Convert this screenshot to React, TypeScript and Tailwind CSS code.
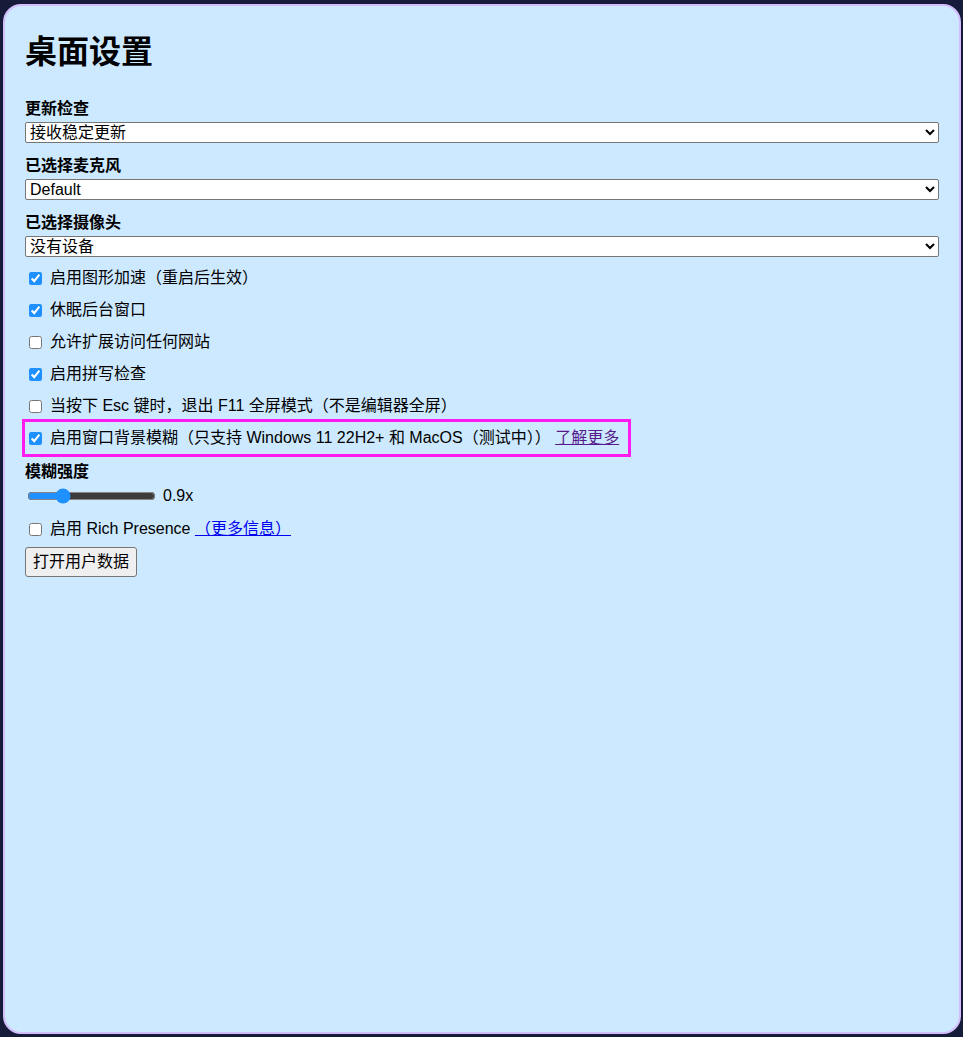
import { useState } from 'react';

type Toggle = {
  id: string;
  label: string;
  checked: boolean;
};

const toggles: Toggle[] = [
  { id: 'hw', label: '启用图形加速（重启后生效）', checked: true },
  { id: 'sleep', label: '休眠后台窗口', checked: true },
  { id: 'ext', label: '允许扩展访问任何网站', checked: false },
  { id: 'spell', label: '启用拼写检查', checked: true },
  { id: 'esc', label: '当按下 Esc 键时，退出 F11 全屏模式（不是编辑器全屏）', checked: false },
];

function Field({ label, options }: { label: string; options: string[] }) {
  return (
    <div className="mt-[11px] first:mt-0">
      <div className="text-[16px] leading-[24px] font-bold">{label}</div>
      <select className="mt-[1px] block w-full h-[21px] text-[16px] leading-[19px] pl-0 bg-white border border-[#767676] rounded-[2px] text-black">
        {options.map((o) => (
          <option key={o}>{o}</option>
        ))}
      </select>
    </div>
  );
}

export default function App() {
  const [checks, setChecks] = useState<Record<string, boolean>>(
    Object.fromEntries(toggles.map((t) => [t.id, t.checked]))
  );
  const [blur, setBlur] = useState(true);
  const [rich, setRich] = useState(false);
  const [strength, setStrength] = useState(0.9);

  return (
    <div className="min-h-screen bg-[#161b3a] pt-[4px] pl-[3px] pr-[2px] pb-[3px] font-['Liberation_Sans','Noto_Sans_CJK_SC',sans-serif] text-black accent-[#1e90ff]">
      <div className="h-[1030px] rounded-[18px] border-2 border-[#d3bdfc] bg-[#cde9ff] px-[20px] pt-[26px]">
        <h1 className="text-[32px] leading-[40px] font-bold">桌面设置</h1>

        <div className="mt-[25px]">
          <Field label="更新检查" options={['接收稳定更新', '接收测试版更新', '不检查更新']} />
          <Field label="已选择麦克风" options={['Default']} />
          <Field label="已选择摄像头" options={['没有设备']} />
        </div>

        <div className="mt-[5px]">
          {toggles.map((t) => (
            <label key={t.id} className="flex items-center h-[32px] text-[16px]">
              <input
                type="checkbox"
                className="ml-[4px] mr-[8px] w-[13px] h-[13px]"
                checked={checks[t.id]}
                onChange={(e) => setChecks({ ...checks, [t.id]: e.target.checked })}
              />
              <span>{t.label}</span>
            </label>
          ))}

          {/* highlighted option */}
          <div className="flex items-center h-[32px] w-fit pr-[9px] text-[16px] outline-[3px] outline-solid outline-[#ff1bf0]">
            <input
              type="checkbox"
              className="ml-[4px] mr-[8px] w-[13px] h-[13px]"
              checked={blur}
              onChange={(e) => setBlur(e.target.checked)}
            />
            <span>
              启用窗口背景模糊（只支持 Windows 11 22H2+ 和 MacOS（测试中））{' '}
              <a href="#blur" className="underline text-[#551a8b]">
                了解更多
              </a>
            </span>
          </div>
        </div>

        <div className="mt-[8px] text-[16px] leading-[20px] font-bold">模糊强度</div>
        <div className="mt-[2px] flex items-center h-[24px] text-[16px]">
          <input
            type="range"
            min={0}
            max={3.6}
            step={0.1}
            value={strength}
            onChange={(e) => setStrength(Number(e.target.value))}
            className="ml-[2px] w-[129px] h-[16px]"
          />
          <span className="ml-[7px]">{strength.toFixed(1)}x</span>
        </div>

        <label className="mt-[5px] flex items-center h-[32px] text-[16px]">
          <input
            type="checkbox"
            className="ml-[4px] mr-[8px] w-[13px] h-[13px]"
            checked={rich}
            onChange={(e) => setRich(e.target.checked)}
          />
          <span>
            启用 Rich Presence{' '}
            <a href="#rich" className="underline text-[#0000ee]">
              （更多信息）
            </a>
          </span>
        </label>

        <button className="mt-[2px] h-[30px] px-[7px] text-[16px] bg-[#efefef] border border-[#767676] rounded-[3px]">
          打开用户数据
        </button>
      </div>
    </div>
  );
}
